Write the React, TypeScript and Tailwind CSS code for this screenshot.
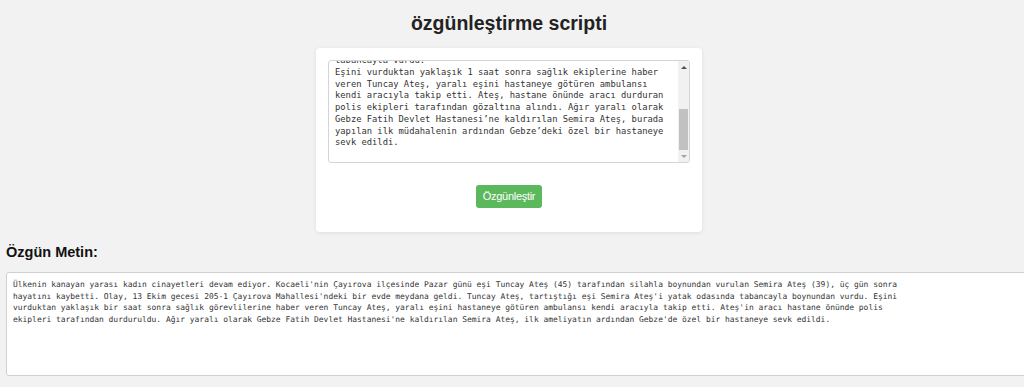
const topLines = [
  "tabancayla vurdu.",
  "Eşini vurduktan yaklaşık 1 saat sonra sağlık ekiplerine haber",
  "veren Tuncay Ateş, yaralı eşini hastaneye götüren ambulansı",
  "kendi aracıyla takip etti. Ateş, hastane önünde aracı durduran",
  "polis ekipleri tarafından gözaltına alındı. Ağır yaralı olarak",
  "Gebze Fatih Devlet Hastanesi’ne kaldırılan Semira Ateş, burada",
  "yapılan ilk müdahalenin ardından Gebze’deki özel bir hastaneye",
  "sevk edildi.",
];

const resultLines = [
  "Ülkenin kanayan yarası kadın cinayetleri devam ediyor. Kocaeli'nin Çayırova ilçesinde Pazar günü eşi Tuncay Ateş (45) tarafından silahla boynundan vurulan Semira Ateş (39), üç gün sonra",
  "hayatını kaybetti. Olay, 13 Ekim gecesi 205-1 Çayırova Mahallesi'ndeki bir evde meydana geldi. Tuncay Ateş, tartıştığı eşi Semira Ateş'i yatak odasında tabancayla boynundan vurdu. Eşini",
  "vurduktan yaklaşık bir saat sonra sağlık görevlilerine haber veren Tuncay Ateş, yaralı eşini hastaneye götüren ambulansı kendi aracıyla takip etti. Ateş'in aracı hastane önünde polis",
  "ekipleri tarafından durduruldu. Ağır yaralı olarak Gebze Fatih Devlet Hastanesi'ne kaldırılan Semira Ateş, ilk ameliyatın ardından Gebze'de özel bir hastaneye sevk edildi.",
];

function Scrollbar() {
  return (
    <div className="w-[11px] bg-[#f1f1f1] flex flex-col items-center">
      <div className="h-[12px] flex items-center justify-center">
        <div className="w-0 h-0 border-l-[3px] border-r-[3px] border-b-[3px] border-l-transparent border-r-transparent border-b-[#505050]" />
      </div>
      <div className="flex-1 w-full flex flex-col justify-end">
        <div className="h-[41px] mx-[1px] bg-[#c1c1c1]" />
      </div>
      <div className="h-[12px] flex items-center justify-center">
        <div className="w-0 h-0 border-l-[3px] border-r-[3px] border-t-[3px] border-l-transparent border-r-transparent border-t-[#a3a3a3]" />
      </div>
    </div>
  );
}

export default function App() {
  return (
    <div className="min-h-[387px] w-full bg-[#f2f2f2] font-['Liberation_Sans',Arial,sans-serif] text-[#222] overflow-hidden">
      <div className="w-[1018px]">
        <h1 className="pt-[10px] text-center text-[19.5px] leading-[26px] font-bold text-[#222]">
          özgünleştirme scripti
        </h1>

        <div className="flex justify-center mt-[12px]">
          <div className="w-[386px] h-[184px] bg-white rounded-[4px] shadow-[0_1px_4px_rgba(0,0,0,0.08)] px-[12px] pt-[12px]">
            <div className="h-[103px] border border-[#d4d4d4] rounded-[3px] flex overflow-hidden bg-white">
              <div className="flex-1 overflow-hidden flex flex-col justify-end pl-[6px] pb-[13px] font-['DejaVu_Sans_Mono','Liberation_Mono',monospace] text-[8.8px] leading-[11.7px] text-[#333]">
                {topLines.map((l, i) => (
                  <div key={i} className="whitespace-pre">
                    {l}
                  </div>
                ))}
              </div>
              <Scrollbar />
            </div>
            <div className="flex justify-center mt-[22px]">
              <button className="h-[23px] w-[66px] rounded-[3px] bg-[#5cb85c] text-white text-[11px] tracking-[-0.3px]">
                Özgünleştir
              </button>
            </div>
          </div>
        </div>

        <h2 className="mt-[10px] pl-[6px] text-[14.5px] leading-[20px] font-bold text-[#111]">
          Özgün Metin:
        </h2>
      </div>

      <div className="mt-[10px] ml-[6px] w-[1030px] h-[104px] bg-white border border-[#d0d0d0] rounded-[3px] pl-[6px] pt-[6px] overflow-hidden font-['DejaVu_Sans_Mono','Liberation_Mono',monospace] text-[7.95px] leading-[11.7px] text-[#333]">
        {resultLines.map((l, i) => (
          <div key={i} className="whitespace-pre">
            {l}
          </div>
        ))}
      </div>
    </div>
  );
}
